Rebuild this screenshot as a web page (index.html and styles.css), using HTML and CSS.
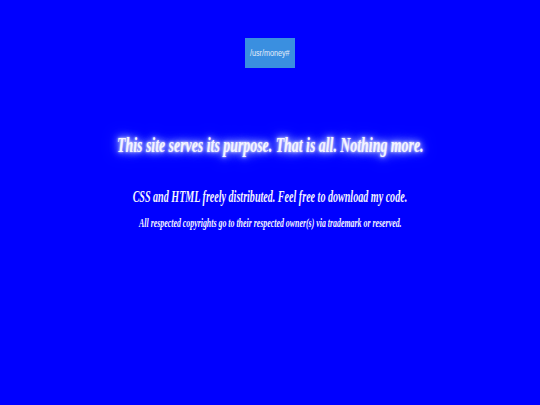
FILE: index.html
```html
<!DOCTYPE html>
<html>
<head>
<meta charset="utf-8">
<link rel="stylesheet" href="styles.css">
</head>
<body>
<div class="page">
  <div class="logo"><span class="logo-text">/usr/money#</span></div>
  <h1 class="title"><span class="squish">This site serves its purpose. That is all. Nothing more.</span></h1>
  <p class="sub"><span class="squish">CSS and HTML freely distributed. Feel free to download my code.</span></p>
  <p class="small"><span class="squish">All respected copyrights go to their respected owner(s) via trademark or reserved.</span></p>
</div>
</body>
</html>
```
FILE: styles.css
```css
html, body {
  margin: 0;
  padding: 0;
  background: #0000ff;
  width: 540px;
  height: 405px;
  overflow: hidden;
}
.page {
  display: flex;
  flex-direction: column;
  align-items: center;
  padding-top: 38px;
  font-family: "Liberation Serif", serif;
  color: #f4f4ff;
}
.logo {
  width: 50px;
  height: 30px;
  background: #3a8fe0;
  display: flex;
  align-items: center;
  justify-content: center;
}
.logo-text {
  font-family: "Liberation Sans", sans-serif;
  font-size: 9px;
  color: #e6eefa;
  display: inline-block;
  transform: scaleX(0.8);
  white-space: nowrap;
}
.squish {
  display: inline-block;
  white-space: nowrap;
  transform: scaleX(0.63);
}
.title {
  margin: 64px 0 0;
  font-size: 22px;
  font-weight: bold;
  font-style: italic;
  line-height: 26px;
  text-shadow: 0 0 3px #ffffff, 0 0 8px #c0ccff, 0 0 14px #8ea4ff, 0 0 20px #6f8cff;
}
.sub {
  margin: 30px 0 0;
  font-size: 16px;
  font-weight: bold;
  font-style: italic;
  line-height: 18px;
}
.small {
  margin: 10px 0 0;
  font-size: 12.5px;
  font-weight: bold;
  font-style: italic;
  line-height: 14px;
}
```
